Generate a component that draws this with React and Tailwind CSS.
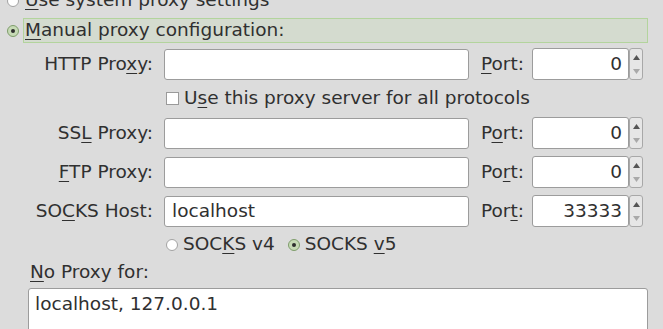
import React from 'react';

// small helpers for the GTK-ish proxy dialog
function Radio({ checked }) {
  if (checked) {
    return (
      <span className="w-[12px] h-[12px] rounded-full border border-[#7f9d6c] bg-[#c6dab5] flex items-center justify-center shrink-0">
        <span className="w-[4px] h-[4px] rounded-full bg-[#2e2e2e]" />
      </span>
    );
  }
  return <span className="w-[12px] h-[12px] rounded-full border border-[#a3a3a3] bg-white shrink-0" />;
}

function Key({ children }) {
  return <u className="underline decoration-1 underline-offset-[3px]">{children}</u>;
}

function Spin({ value, disabledDown = true }) {
  return (
    <div className="flex h-[32px] w-[111px]">
      <div className="flex-1 h-full bg-white border border-[#9c9c9c] rounded-[3px] flex items-center justify-end pr-[6px]">
        {value}
      </div>
      <div className="w-[14px] h-full border border-[#a8a8a8] rounded-[3px] bg-[#e6e6e6] flex flex-col items-center justify-center gap-[9px]">
        <svg width="7" height="5" viewBox="0 0 7 5"><path d="M3.5 0 L7 5 L0 5 Z" fill="#555" /></svg>
        <svg width="7" height="5" viewBox="0 0 7 5"><path d="M0 0 L7 0 L3.5 5 Z" fill={disabledDown ? '#a9a9a9' : '#555'} /></svg>
      </div>
    </div>
  );
}

function ProxyRow({ label, value, port, portLabel, className = '' }) {
  return (
    <div className={`flex items-center h-[32px] ${className}`}>
      <div className="w-[153px] text-right whitespace-nowrap">{label}</div>
      <div className="ml-[11px] w-[305px] h-[31px] bg-white border border-[#9c9c9c] rounded-[3px] flex items-center pl-[7px]">
        {value}
      </div>
      <div className="ml-[12px] w-[51px] whitespace-nowrap">{portLabel}</div>
      <Spin value={port} />
    </div>
  );
}

export default function App() {
  return (
    <div className="min-h-screen h-[329px] overflow-hidden bg-[#dcdcdc] text-[#303030] text-[18.5px] leading-none font-['DejaVu_Sans',sans-serif]">
      <div className="-mt-[12px]">
        <div className="flex items-center h-[25px] pl-[7px] gap-[6px]">
          <Radio />
          <span><Key>U</Key>se system proxy settings</span>
        </div>

        <div className="flex items-center mt-[5px] pl-[7px]">
          <Radio checked />
          <div className="ml-[4px] w-[625px] h-[25px] border border-[#b3d49d] bg-[#d4dbcf] flex items-center pl-[1px]">
            <span><Key>M</Key>anual proxy configuration:</span>
          </div>
        </div>

        <ProxyRow
          className="mt-[5px]"
          label={<>HTTP Pro<Key>x</Key>y:</>}
          portLabel={<><Key>P</Key>ort:</>}
          port="0"
        />

        <div className="flex items-center h-[21px] mt-[8px] pl-[166px] gap-[5px]">
          <span className="w-[13px] h-[13px] border border-[#9a9a9a] bg-white shrink-0" />
          <span className="whitespace-nowrap">U<Key>s</Key>e this proxy server for all protocols</span>
        </div>

        <ProxyRow
          className="mt-[8px]"
          label={<>SS<Key>L</Key> Proxy:</>}
          portLabel={<>P<Key>o</Key>rt:</>}
          port="0"
        />
        <ProxyRow
          className="mt-[7px]"
          label={<><Key>F</Key>TP Proxy:</>}
          portLabel={<>Po<Key>r</Key>t:</>}
          port="0"
        />
        <ProxyRow
          className="mt-[7px]"
          label={<>SO<Key>C</Key>KS Host:</>}
          value="localhost"
          portLabel={<>Por<Key>t</Key>:</>}
          port="33333"
        />

        <div className="flex items-center h-[21px] mt-[7px] pl-[166px]">
          <Radio />
          <span className="ml-[5px] whitespace-nowrap">SOC<Key>K</Key>S v4</span>
          <span className="ml-[13px]"><Radio checked /></span>
          <span className="ml-[5px] whitespace-nowrap">SOCKS <Key>v</Key>5</span>
        </div>

        <div className="flex items-center h-[20px] mt-[7px] pl-[30px]">
          <span><Key>N</Key>o Proxy for:</span>
        </div>

        <div className="mt-[6px] ml-[28px] w-[620px] h-[80px] bg-white border border-[#9c9c9c] rounded-[3px] pl-[6px] pt-[6px]">
          localhost, 127.0.0.1
        </div>
      </div>
    </div>
  );
}
